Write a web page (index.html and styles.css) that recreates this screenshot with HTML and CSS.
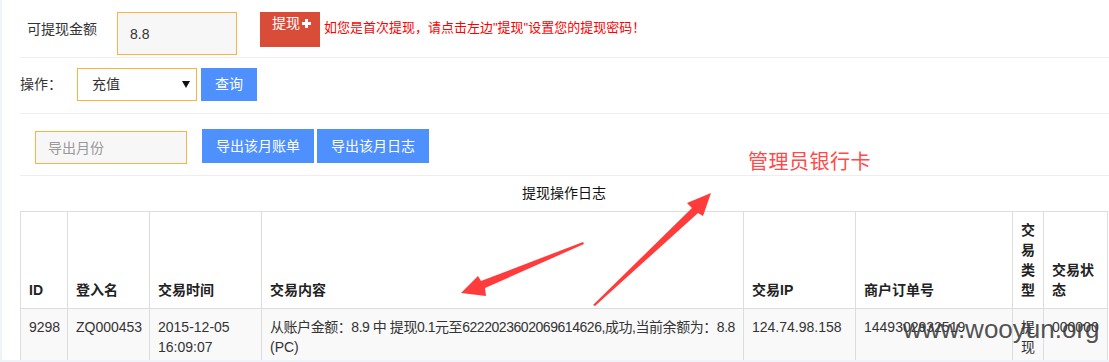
FILE: index.html
```html
<!DOCTYPE html>
<html lang="zh-CN">
<head>
  <meta charset="UTF-8">
  <title>提现操作日志</title>
  <link rel="stylesheet" href="styles.css">
</head>
<body>
  <div class="main">
    <div class="bar bar-amount">
      <span class="label label-amount">可提现金额</span>
      <input class="field field-amount" type="text" value="8.8">
      <a class="btn-withdraw">提现<svg class="plus" width="9" height="9" viewBox="0 0 9 9"><path d="M3 0h3v3h3v3H6v3H3V6H0V3h3z" fill="#fff"/></svg></a>
      <span class="notice">如您是首次提现，请点击左边"提现"设置您的提现密码！</span>
    </div>

    <div class="bar bar-query">
      <span class="label label-op">操作：</span>
      <div class="select-box">充值<svg class="caret" width="8" height="7" viewBox="0 0 8 7"><path d="M0 0h8L4 7z" fill="#111"/></svg></div>
      <a class="btn btn-query">查询</a>
    </div>

    <div class="bar bar-export">
      <input class="field field-month" type="text" placeholder="导出月份">
      <a class="btn btn-export">导出该月账单</a>
      <a class="btn btn-export btn-export-log">导出该月日志</a>
    </div>

    <div class="log-title">提现操作日志</div>
    <table class="log-table">
      <colgroup>
        <col style="width:47px">
        <col style="width:82px">
        <col style="width:112px">
        <col style="width:482px">
        <col style="width:112px">
        <col style="width:157px">
        <col style="width:31px">
        <col style="width:64px">
      </colgroup>
      <thead>
        <tr>
          <th>ID</th>
          <th>登入名</th>
          <th>交易时间</th>
          <th>交易内容</th>
          <th>交易IP</th>
          <th>商户订单号</th>
          <th>交易类型</th>
          <th>交易状态</th>
        </tr>
      </thead>
      <tbody>
        <tr>
          <td class="nowrap">9298</td>
          <td class="nowrap">ZQ000453</td>
          <td>2015-12-05 16:09:07</td>
          <td><span class="nowrap tight">从账户金额：8.9 中 提现0.1元至6222023602069614626,成功,当前余额为：8.8</span><br>(PC)</td>
          <td class="nowrap">124.74.98.158</td>
          <td class="nowrap">1449302932519</td>
          <td>提现</td>
          <td class="nowrap">000000</td>
        </tr>
      </tbody>
    </table>
  </div>

  <!-- annotations drawn over the screenshot -->
  <div class="note-card">管理员银行卡</div>
  <svg class="arrows" width="1109" height="362" viewBox="0 0 1109 362">
    <polygon points="461,293 478,276 481,281 583,242 584,244 485,288 486,296" fill="#ff3b3b"/>
    <polygon points="711,193 687,203 692,208 593,305 595,306 698,213 703,216" fill="#ff3b3b"/>
  </svg>
  <div class="watermark">www.wooyun.org</div>
</body>
</html>
```

FILE: styles.css
```css
body {
  margin: 0;
  background: #eef3f9;
  font-family: "Liberation Sans", "Noto Sans CJK SC", sans-serif;
  font-size: 14px;
  color: #333;
  position: relative;
  width: 1109px;
  height: 362px;
  overflow: hidden;
}

.main {
  margin-left: 2px;
  height: 360px;
  background: #fff;
  overflow: hidden;
}

.bar {
  margin-left: 18px;
  display: flex;
  align-items: flex-start;
  border-bottom: 1px solid #eee;
  box-sizing: border-box;
}

.bar-amount {
  height: 58px;
  padding: 12px 0 0 7px;
}

.bar-query {
  height: 56px;
  padding-top: 10px;
}

.bar-export {
  height: 62px;
  padding-left: 15px;
}

.label {
  line-height: 34px;
}

.label-amount {
  width: 90px;
}

.label-op {
  width: 57px;
  line-height: 33px;
}

.field {
  box-sizing: border-box;
  border: 1px solid #f5b445;
  background: #f7f7f7;
  font-family: inherit;
  font-size: 14px;
  color: #333;
  padding: 0 12px;
  outline: none;
}

.field-amount {
  width: 120px;
  height: 43px;
}

.field-month {
  width: 152px;
  height: 33px;
  margin-top: 17px;
}

.field-month::placeholder {
  color: #999;
}

.btn-withdraw {
  display: flex;
  align-items: center;
  box-sizing: border-box;
  width: 60px;
  height: 35px;
  margin-left: 23px;
  padding: 1px 0 14px 12px;
  line-height: 20px;
  background: #d84c38;
  color: #fff;
}

.plus {
  margin-left: 2px;
}

.notice {
  margin-left: 4px;
  line-height: 32px;
  font-size: 13px;
  color: #ff0000;
}

.select-box {
  position: relative;
  box-sizing: border-box;
  width: 120px;
  height: 33px;
  padding-left: 14px;
  line-height: 31px;
  border: 1px solid #f5b445;
  background: #fff;
  color: #333;
}

.caret {
  position: absolute;
  right: 6px;
  top: 12px;
}

.btn {
  display: block;
  box-sizing: border-box;
  text-align: center;
  background: #4d90fe;
  color: #fff;
}

.btn-query {
  width: 56px;
  height: 33px;
  line-height: 33px;
  margin-left: 4px;
}

.btn-export {
  width: 112px;
  height: 34px;
  line-height: 34px;
  margin: 15px 0 0 15px;
}

.btn-export-log {
  margin-left: 3px;
}

.log-title {
  margin-left: 18px;
  width: 1088px;
  line-height: 35px;
  text-align: center;
  color: #111;
}

.log-table {
  margin-left: 18px;
  width: 1088px;
  border-collapse: collapse;
  table-layout: fixed;
  line-height: 20px;
}

.log-table th,
.log-table td {
  border: 1px solid #ddd;
  padding: 8px;
  text-align: left;
  word-wrap: break-word;
}

.log-table th {
  vertical-align: bottom;
  font-weight: bold;
  color: #222;
}

.log-table td {
  vertical-align: top;
  background: #f9f9f9;
  color: #333;
}

.nowrap {
  white-space: nowrap;
}

.tight {
  letter-spacing: -0.45px;
}

.note-card {
  position: absolute;
  left: 748px;
  top: 152px;
  font-size: 20px;
  line-height: 20px;
  color: #ff4a4a;
  letter-spacing: 0.5px;
}

.arrows {
  position: absolute;
  left: 0;
  top: 0;
  pointer-events: none;
}

.watermark {
  position: absolute;
  left: 903px;
  top: 316px;
  font-family: "Liberation Sans", sans-serif;
  font-size: 26px;
  line-height: 26px;
  color: rgba(60, 60, 60, 0.9);
}
```
